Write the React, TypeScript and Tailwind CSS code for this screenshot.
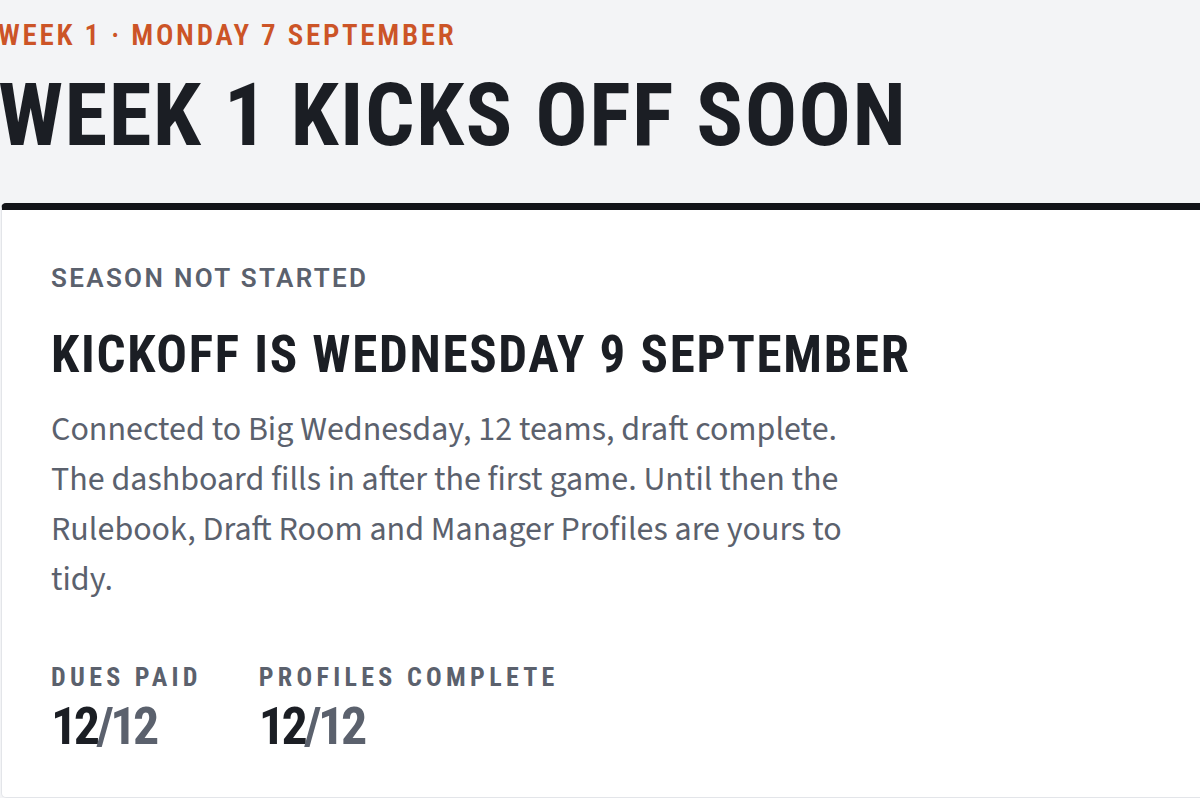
const narrow = "font-['Roboto_Condensed','Roboto',sans-serif] [font-stretch:75%]";

function Stat({ label, done, total }: { label: string; done: number; total: number }) {
  return (
    <div className="flex flex-col">
      <span className={`${narrow} text-[26px] font-bold uppercase leading-none tracking-[4.3px] text-[#5b616d]`}>
        {label}
      </span>
      <span className={`${narrow} mt-[11px] text-[52px] font-bold leading-none tracking-[-3.5px] text-[#1b1e24]`}>
        {done}
        <span className="text-[#5b616d]">/{total}</span>
      </span>
    </div>
  );
}

export default function App() {
  return (
    <div className="h-[798px] overflow-hidden bg-[#f3f4f6] pl-[1px]">
      {/* page header */}
      <header className="-ml-[3px] pt-[21px]">
        <p className={`${narrow} text-[29px] font-semibold uppercase leading-none tracking-[2.7px] text-[#cc5427]`}>
          Week 1 · Monday 7 September
        </p>
        <h1 className={`${narrow} mt-[22px] text-[87px] font-bold uppercase leading-none tracking-[1.4px] text-[#1b1e24]`}>
          Week 1 kicks off soon
        </h1>
      </header>

      {/* status card */}
      <section className="mt-[44px] h-[595px] w-[1220px] rounded-[5px] border border-[#e3e5e9] border-t-[7px] border-t-[#121418] bg-white px-[49px] pt-[55px]">
        <p className="font-['Roboto',sans-serif] text-[26px] font-semibold uppercase leading-none tracking-[0.09em] text-[#5b616d]">
          Season not started
        </p>
        <h2 className={`${narrow} mt-[38px] text-[51px] font-bold uppercase leading-none tracking-[1.7px] text-[#1b1e24]`}>
          Kickoff is Wednesday 9 September
        </h2>
        <p className="mt-[25px] max-w-[810px] font-['Source_Sans_3','Open_Sans',sans-serif] text-[34px] leading-[50px] text-[#5b616d]">
          Connected to Big Wednesday, 12 teams, draft complete. The dashboard fills in after the first game. Until
          then the Rulebook, Draft Room and Manager Profiles are yours to tidy.
        </p>
        <div className="mt-[59px] flex gap-[57px]">
          <Stat label="Dues paid" done={12} total={12} />
          <Stat label="Profiles complete" done={12} total={12} />
        </div>
      </section>
    </div>
  );
}
